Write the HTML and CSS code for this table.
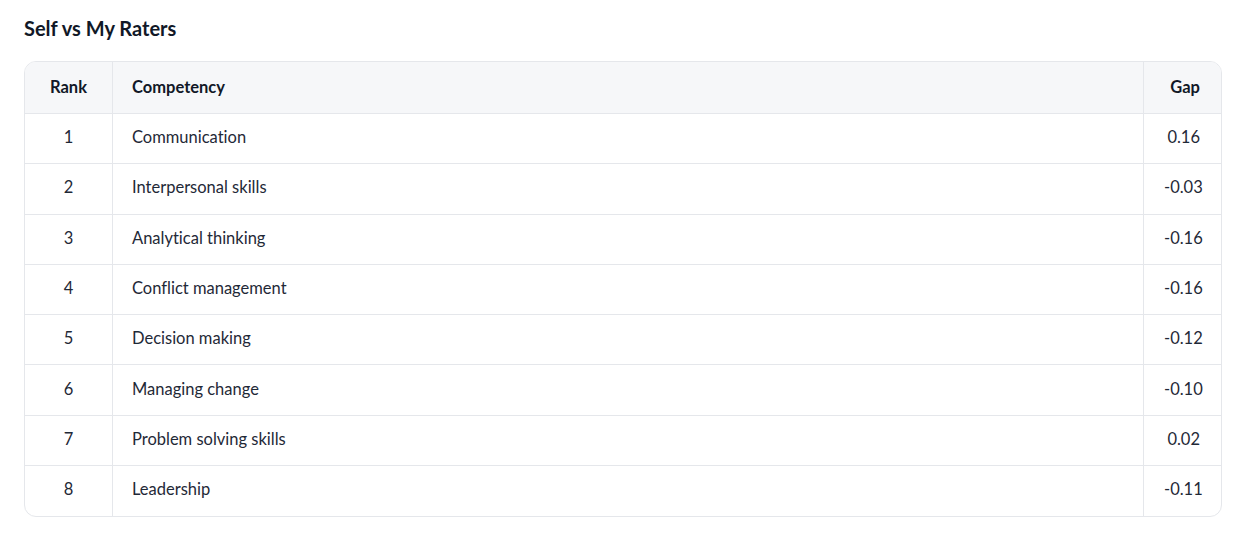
FILE: index.html
```html
<!DOCTYPE html>
<html>
<head>
<meta charset="utf-8">
<link rel="stylesheet" href="styles.css">
</head>
<body>
<section class="panel">
  <h2 class="title">Self vs My Raters</h2>
  <div class="table-wrap">
    <table class="gap-table">
      <colgroup>
        <col class="col-rank">
        <col>
        <col class="col-gap">
      </colgroup>
      <thead>
        <tr><th class="rank">Rank</th><th class="comp">Competency</th><th class="gap">Gap</th></tr>
      </thead>
      <tbody>
        <tr><td class="rank">1</td><td class="comp">Communication</td><td class="gap">0.16</td></tr>
        <tr><td class="rank">2</td><td class="comp">Interpersonal skills</td><td class="gap">-0.03</td></tr>
        <tr><td class="rank">3</td><td class="comp">Analytical thinking</td><td class="gap">-0.16</td></tr>
        <tr><td class="rank">4</td><td class="comp">Conflict management</td><td class="gap">-0.16</td></tr>
        <tr><td class="rank">5</td><td class="comp">Decision making</td><td class="gap">-0.12</td></tr>
        <tr><td class="rank">6</td><td class="comp">Managing change</td><td class="gap">-0.10</td></tr>
        <tr><td class="rank">7</td><td class="comp">Problem solving skills</td><td class="gap">0.02</td></tr>
        <tr><td class="rank">8</td><td class="comp">Leadership</td><td class="gap">-0.11</td></tr>
      </tbody>
    </table>
  </div>
</section>
</body>
</html>
```
FILE: styles.css
```css
html, body {
  margin: 0;
  padding: 0;
  background: #ffffff;
}
body {
  font-family: Lato, "Liberation Sans", sans-serif;
  color: #111827;
  font-variant-ligatures: none;
}
.panel {
  padding: 14px 29px 0 24px;
}
.title {
  margin: 0 0 19px 0;
  font-size: 20px;
  line-height: 28px;
  font-weight: 700;
  color: #111827;
}
.table-wrap {
  border: 1px solid #e5e7eb;
  border-radius: 12px;
  overflow: hidden;
}
.gap-table {
  width: 100%;
  table-layout: fixed;
  border-collapse: separate;
  border-spacing: 0;
  font-size: 16.5px;
}
.col-rank {
  width: 88px;
}
.col-gap {
  width: 78px;
}
.gap-table th,
.gap-table td {
  height: 50.3px;
  box-sizing: border-box;
  padding: 0 20px 3px 20px;
  line-height: 20px;
  border-bottom: 1px solid #e5e7eb;
  color: #1f2937;
  white-space: nowrap;
}
.gap-table tbody tr:last-child td {
  border-bottom: none;
  height: 49.6px;
}
.gap-table th {
  background: #f6f7f9;
  font-weight: 700;
  color: #111827;
  height: 52px;
  padding-bottom: 2px;
}
.rank {
  text-align: center;
  border-right: 1px solid #e5e7eb;
}
.gap-table .comp {
  text-align: left;
  padding-left: 19px;
}
.gap {
  text-align: right;
  border-left: 1px solid #e5e7eb;
}
.gap-table td.gap,
.gap-table th.gap {
  padding-right: 21px;
}
```
